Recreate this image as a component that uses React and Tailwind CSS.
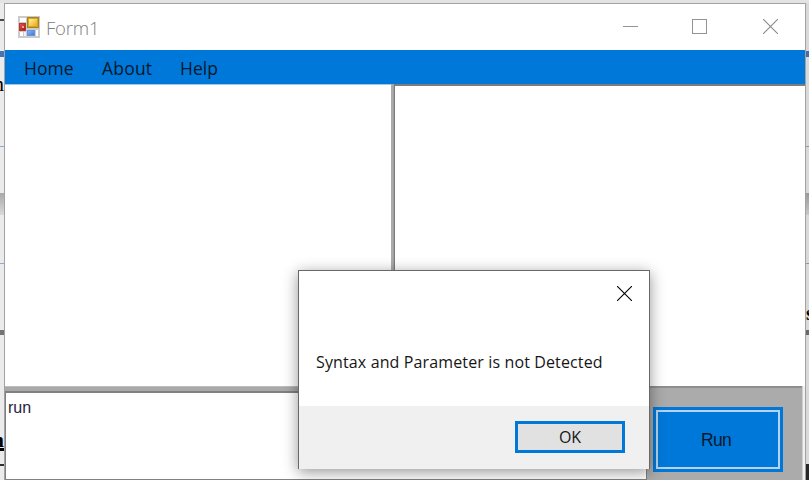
import React from "react";

function LeftStrip() {
  return (
    <div className="w-[4px] shrink-0 h-full flex flex-col overflow-hidden bg-[#ebebeb] font-['Liberation_Serif',serif] text-black">
      <div className="h-[16px] shrink-0" />
      <div className="h-[2px] shrink-0 bg-[#4a4a4a]" />
      <div className="h-[30px] shrink-0" />
      <div className="h-[6px] shrink-0 bg-[#4673b3]" />
      <div className="h-[89px] shrink-0 flex justify-end pt-[15px]">
        <span className="text-[21px] leading-[24px]">n</span>
      </div>
      <div className="h-px shrink-0 bg-[#8fa9cb]" />
      <div className="h-[46px] shrink-0" />
      <div className="h-[22px] shrink-0 bg-gradient-to-b from-[#a9a9a9] to-[#dadada]" />
      <div className="h-[48px] shrink-0" />
      <div className="h-px shrink-0 bg-[#8fa9cb]" />
      <div className="h-[66px] shrink-0" />
      <div className="h-[5px] shrink-0 bg-[#737373]" />
      <div className="h-[113px] shrink-0 flex justify-end pt-[93px]">
        <span className="text-[21px] leading-[24px] font-bold">n</span>
      </div>
      <div className="h-[3px] shrink-0 bg-black" />
      <div className="h-[13px] shrink-0" />
      <div className="h-[2px] shrink-0 bg-[#303030]" />
    </div>
  );
}

function RightStrip() {
  return (
    <div className="w-[3px] shrink-0 h-full flex flex-col overflow-hidden bg-[#d9d9d9] font-['Liberation_Serif',serif]">
      <div className="h-[48px] shrink-0" />
      <div className="h-[6px] shrink-0 bg-[#4a6d9f]" />
      <div className="h-[89px] shrink-0" />
      <div className="h-px shrink-0 bg-[#8299b8]" />
      <div className="h-[46px] shrink-0" />
      <div className="h-[22px] shrink-0 bg-gradient-to-b from-[#999] to-[#c8c8c8]" />
      <div className="h-[48px] shrink-0" />
      <div className="h-px shrink-0 bg-[#8299b8]" />
      <div className="h-[66px] shrink-0 pt-[37px]">
        <span className="block text-[20px] leading-[24px] font-bold text-black">s</span>
      </div>
      <div className="h-[5px] shrink-0 bg-[#696969]" />
      <div className="h-[129px] shrink-0" />
      <div className="h-[16px] shrink-0 bg-[#262626]" />
    </div>
  );
}

function FormIcon() {
  return (
    <svg width="22" height="22" viewBox="0 0 22 22" className="shrink-0">
      <defs>
        <linearGradient id="gold" x1="0" y1="0" x2="1" y2="1">
          <stop offset="0" stopColor="#fff0a8" />
          <stop offset="1" stopColor="#e6ad10" />
        </linearGradient>
        <linearGradient id="red" x1="0" y1="0" x2="1" y2="1">
          <stop offset="0" stopColor="#e06055" />
          <stop offset="1" stopColor="#a90f0a" />
        </linearGradient>
        <linearGradient id="blue" x1="0" y1="0" x2="1" y2="1">
          <stop offset="0" stopColor="#8fbaf5" />
          <stop offset="1" stopColor="#3c70d2" />
        </linearGradient>
      </defs>
      <rect x="0" y="0" width="22" height="22" fill="#cbcbcb" />
      <rect x="2" y="2" width="6" height="4" fill="#fff" />
      <rect x="2" y="16" width="3" height="4" fill="#fff" />
      <rect x="6" y="16" width="2" height="4" fill="#f2f2f2" />
      <rect x="18" y="14" width="2" height="6" fill="#fff" />
      <rect x="1.5" y="7.5" width="6" height="7" fill="url(#red)" stroke="#b8352e" />
      <rect x="4" y="10" width="2" height="2" fill="#f5a499" />
      <rect x="9.5" y="1.5" width="11" height="10" fill="#d9a514" stroke="#a98220" />
      <rect x="11" y="3" width="8" height="7" fill="url(#gold)" />
      <rect x="9.5" y="14.5" width="7" height="5" fill="url(#blue)" stroke="#6294e3" />
    </svg>
  );
}

function Cross({ color }) {
  return (
    <svg width="15" height="15" viewBox="0 0 15 15" className="shrink-0" fill="none" stroke={color} strokeWidth="1.1">
      <path d="M0 0L15 15M15 0L0 15" />
    </svg>
  );
}

function TitleBar() {
  return (
    <div className="h-[46px] shrink-0 flex items-center bg-white pl-[13px] pr-[27px]">
      <FormIcon />
      <span className="ml-[6px] w-[60px] text-[18.5px] leading-[24px] font-light tracking-[-0.2px] text-[#808080] pt-px">Form1</span>
      <div className="ml-auto flex items-center -mt-px">
        <div className="w-[15px] h-px bg-[#939393]" />
        <div className="ml-[54px] w-[15px] h-[15px] border border-[#939393]" />
        <div className="ml-[56px]">
          <Cross color="#8a8a8a" />
        </div>
      </div>
    </div>
  );
}

function MenuBar() {
  return (
    <div className="h-[34px] shrink-0 flex items-center bg-[#0078d9] pl-[19px] text-[17.5px] leading-[24px] text-[#06182c] pt-px">
      <span className="w-[78px]">Home</span>
      <span className="w-[78px] tracking-[0.2px]">About</span>
      <span>Help</span>
    </div>
  );
}

function Dialog() {
  return (
    <div className="absolute left-[298px] top-[270px] w-[352px] h-[199px] flex flex-col border border-b-0 border-[#686868] bg-white shadow-[0_3px_14px_rgba(0,0,0,0.42)]">
      <div className="flex justify-end pt-[15px] pr-[17px]">
        <Cross color="#000" />
      </div>
      <p className="mt-[49px] pl-[17px] text-[16px] leading-[24px] tracking-[0.13px] text-[#161616] whitespace-nowrap">
        Syntax and Parameter is not Detected
      </p>
      <div className="mt-auto h-[63px] flex justify-end items-start bg-[#f0f0f0] pt-[15px] pr-[24px]">
        <button className="w-[110px] h-[32px] border-[3px] border-[#0078d7] bg-[#e1e1e1] text-[16px] leading-[24px] text-[#161616] flex items-center justify-center">
          OK
        </button>
      </div>
    </div>
  );
}

export default function App() {
  return (
    <div className="relative w-[809px] h-[480px] overflow-hidden flex flex-col bg-[#e3e3e3] font-['Open_Sans','Noto_Sans',sans-serif]">
      <div className="h-[3px] shrink-0" />
      <div className="h-[477px] flex">
        <LeftStrip />
        <main className="w-[802px] shrink-0 flex flex-col border border-b-0 border-[#a2a2a2] bg-[#ababab] overflow-hidden">
          <TitleBar />
          <MenuBar />
          <div className="h-[302px] shrink-0 flex">
            <div className="w-[386px] bg-white border-t border-[#9acaf0]" />
            <div className="w-[3px] bg-[#ababab] border-r border-[#a0a0a0]" />
            <div className="flex-1 bg-white border-t-2 border-l border-[#7d7d7d]" />
          </div>
          <div className="flex-1 flex">
            <div className="w-[642px] flex flex-col">
              <div className="h-[5px] border-t border-[#bcbcbc] bg-[#a9a9a9]" />
              <div className="flex-1 border border-t-2 border-[#808080] bg-white pl-[2px] pt-[3px] font-['Liberation_Sans',sans-serif] text-[16px] leading-[24px] text-[#25253c]">
                run
              </div>
            </div>
            <div className="flex-1 flex border-t-2 border-[#8e8e8e] pt-[19px] pl-[6px]">
              <button className="w-[130px] h-[65px] border-[3px] border-[#0078d9] bg-[#0078d9] flex">
                <span className="flex-1 self-stretch border-2 border-[#b5d3ec] flex items-center justify-center pr-[4px] font-['Liberation_Sans',sans-serif] text-[17.5px] leading-[24px] tracking-[-0.7px] text-[#06182c]">
                  Run
                </span>
              </button>
            </div>
            <div className="w-[3px] bg-[#f0f0f0] border-l border-[#d0d0d0]" />
          </div>
        </main>
        <RightStrip />
      </div>
      <Dialog />
    </div>
  );
}
